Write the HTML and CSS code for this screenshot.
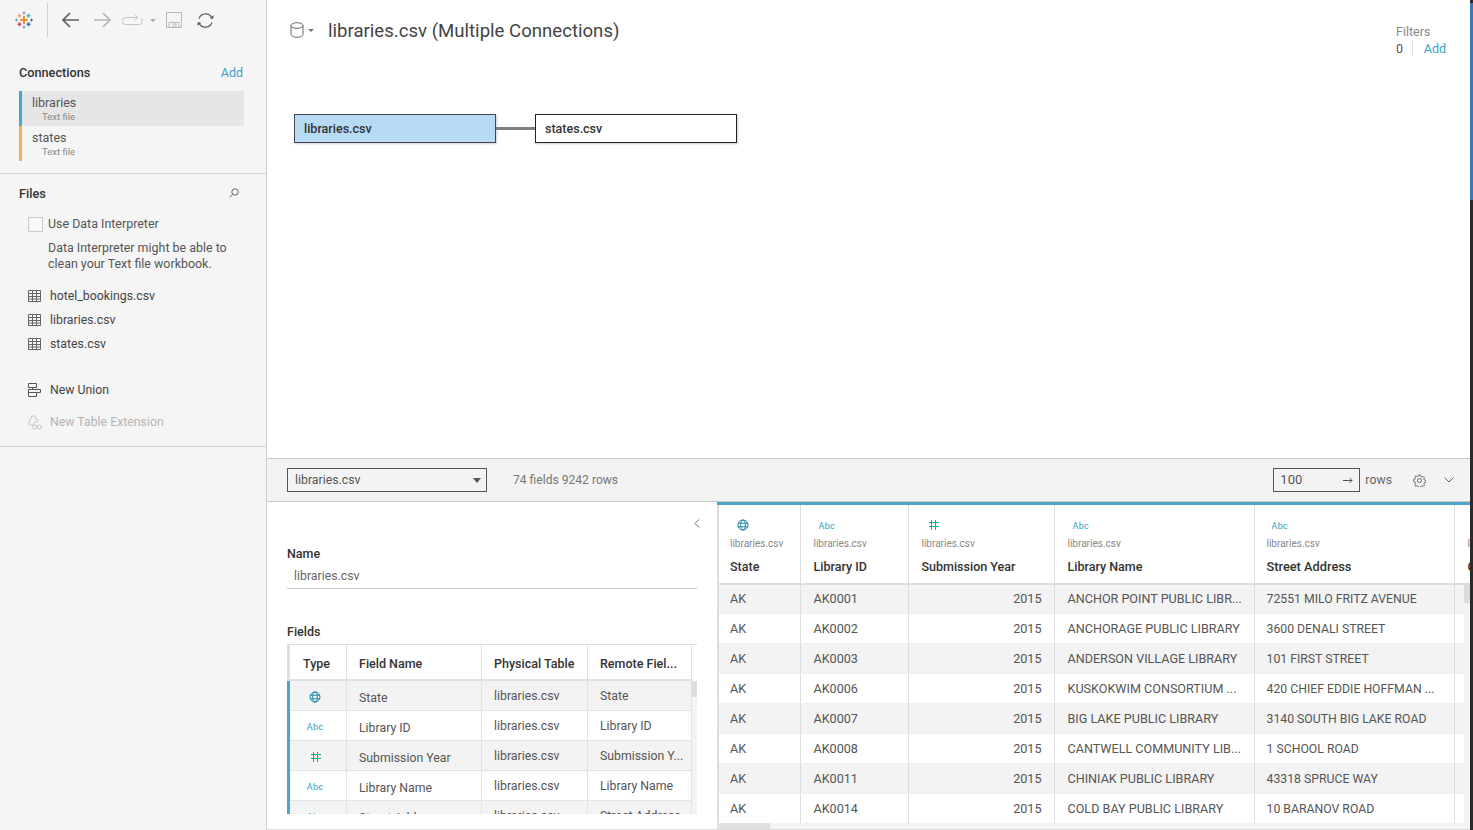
FILE: index.html
```html
<!DOCTYPE html>
<html lang="en">
<head>
<meta charset="utf-8">
<title>libraries.csv (Multiple Connections)</title>
<link rel="stylesheet" href="styles.css">
</head>
<body>
<svg class="defs" aria-hidden="true">
  <symbol id="i-table" viewBox="0 0 13 12"><path d="M.5.5h12v11H.5zM.5 3.5h12M.5 6.5h12M.5 9h12M4.5.5v11M8.5.5v11" fill="none" stroke="#666"/></symbol>
  <symbol id="i-globe" viewBox="0 0 12 12"><g fill="none" stroke="#1f87a8"><circle cx="6" cy="6" r="5"/><ellipse cx="6" cy="6" rx="2.3" ry="5"/><path d="M1 4.2h10M1 7.8h10"/></g></symbol>
  <symbol id="i-hash" viewBox="0 0 11 11"><path d="M3.5.5v10M7.5.5v10M.5 3.5h10M.5 7.5h10" fill="none" stroke="#12b07c" shape-rendering="crispEdges"/></symbol>
</svg>
<div class="app">
  <aside class="sidebar">
    <div class="toolbar">
      <svg class="logo" width="18" height="18" viewBox="0 0 18 18" fill="none" stroke-width="1.6">
        <path d="M9 5v8M5.3 9h7.4" stroke="#f28e2b" stroke-width="2"/>
        <path d="M4.5 2.7v4M2.5 4.7h4" stroke="#f5ab63"/>
        <path d="M13.5 2.7v4M11.5 4.7h4" stroke="#6fa8bd"/>
        <path d="M4.5 11.3v4M2.5 13.3h4" stroke="#e3406a"/>
        <path d="M13.5 11.3v4M11.5 13.3h4" stroke="#3f6fa8"/>
        <path d="M9 .5v3M7.5 2h3M9 14.5v3M7.5 16h3" stroke="#6f9fb8" stroke-width="1.2"/>
        <path d="M1.5 7.5v3M0 9h3" stroke="#8a8fb0" stroke-width="1.2"/>
        <path d="M16.5 7.5v3M15 9h3" stroke="#4d6f9f" stroke-width="1.2"/>
      </svg>
      <span class="tool-sep"></span>
      <svg class="tool-back" width="18" height="16" viewBox="0 0 18 16" fill="none" stroke="#5f5f5f" stroke-width="1.7"><path d="M18 8H2M9 1 2 8l7 7"/></svg>
      <svg class="tool-fwd" width="18" height="16" viewBox="0 0 18 16" fill="none" stroke="#b5b5b5" stroke-width="1.7"><path d="M0 8h16M9 1l7 7-7 7"/></svg>
      <svg class="tool-run" width="21" height="12" viewBox="0 0 21 12" fill="none" stroke="#c4c4c4"><path d="M15 3.500H3.500a3.500 3.500 0 0 0 0 7h14a2.500 2.500 0 0 0 2.500-2.500V4M13 .8l2.500 2.700L13 6.200"/></svg>
      <span class="tool-caret"></span>
      <svg class="tool-save" width="16" height="16" viewBox="0 0 16 16" fill="none" stroke="#b9b9b9"><path d="M.5.5h15v15H.5zM3 15.500v-5h10v5M7 12h3v3H7z"/></svg>
      <svg class="tool-refresh" width="17" height="17" viewBox="0 0 17 17" fill="none" stroke="#5f5f5f" stroke-width="1.2"><path d="M2 6.500A7 7 0 0 1 15 6M15 10.500A7 7 0 0 1 2 11"/><path d="m13 6 3 .5.300-3M4 11l-3-.5-.300 3" fill="#5f5f5f" stroke-width=".6"/></svg>
    </div>

    <section class="connections">
      <div class="side-head"><h2>Connections</h2><a class="add">Add</a></div>
      <div class="conn conn-blue"><div class="conn-name">libraries</div><div class="conn-type">Text file</div></div>
      <div class="conn conn-orange"><div class="conn-name">states</div><div class="conn-type">Text file</div></div>
    </section>

    <section class="files">
      <div class="side-head files-head"><h2>Files</h2>
        <svg width="10" height="10" viewBox="0 0 10 10" fill="none" stroke="#666"><circle cx="6" cy="4" r="3.200"/><path d="M3.800 6.300.8 9.300"/></svg>
      </div>
      <label class="interp"><span class="check"></span><span class="interp-text">Use Data Interpreter</span></label>
      <p class="interp-note">Data Interpreter might be able to clean your Text file workbook.</p>
      <ul class="file-list">
        <li><svg width="13" height="12"><use href="#i-table"/></svg>hotel_bookings.csv</li>
        <li><svg width="13" height="12"><use href="#i-table"/></svg>libraries.csv</li>
        <li><svg width="13" height="12"><use href="#i-table"/></svg>states.csv</li>
      </ul>
      <div class="action action-union">
        <svg width="13" height="14" viewBox="0 0 13 14" fill="none" stroke="#555"><path d="M.5.5h8v4h-8zM4.500 4.500v2M.5 6.500h12M12.500 6.500v3h-4M.5 6.500v7h8v-4H.5"/></svg>New Union
      </div>
      <div class="action action-ext">
        <svg width="15" height="15" viewBox="0 0 15 15" fill="none" stroke="#c8c8c8"><path d="M4 1h3l1 3 2 1v2H6v3H1V8l1-1-1-2 2-1z"/><circle cx="6.500" cy="12" r="2"/><circle cx="11" cy="12" r="2"/><path d="M13 12h2"/></svg>New Table Extension
      </div>
    </section>
  </aside>

  <main class="main">
    <section class="canvas">
      <header class="canvas-head">
        <svg class="db" width="14" height="16" viewBox="0 0 14 16" fill="none" stroke="#666"><ellipse cx="7" cy="3.500" rx="6" ry="2.800"/><path d="M1 3.500v9c0 1.500 2.700 2.800 6 2.800s6-1.300 6-2.800v-9"/></svg>
        <span class="db-caret"></span>
        <h1>libraries.csv (Multiple Connections)</h1>
        <div class="filters">
          <div class="filters-label">Filters</div>
          <div class="filters-row"><span>0</span><a class="add">Add</a></div>
        </div>
      </header>
      <div class="join">
        <div class="join-box join-left">libraries.csv</div>
        <span class="join-line"></span>
        <div class="join-box">states.csv</div>
      </div>
    </section>

    <div class="databar">
      <div class="select">libraries.csv<span class="select-caret"></span></div>
      <span class="meta">74 fields 9242 rows</span>
      <div class="databar-right">
        <div class="rows-input"><span class="rows-value">100</span>
          <svg width="10" height="7" viewBox="0 0 10 7" fill="none" stroke="#555"><path d="M0 3.500h9M6.500 1 9 3.500 6.500 6"/></svg>
        </div>
        <span class="rows-label">rows</span>
        <svg class="gear" width="13" height="13" viewBox="0 0 13 13" fill="none" stroke="#666"><circle cx="6.500" cy="6.500" r="2"/><path d="M5.500.7h2l.4 1.500 1.400.6 1.300-.8 1.400 1.400-.8 1.300.6 1.400 1.500.4v2l-1.500.4-.6 1.400.8 1.300-1.400 1.400-1.300-.8-1.400.6-.4 1.500h-2l-.4-1.500-1.400-.6-1.300.8L1.400 10.500l.8-1.300-.6-1.400L.1 7.500v-2l1.500-.4.600-1.400-.8-1.300L2.800 1.400l1.300.8 1.400-.6z" transform="translate(.5 .5) scale(.92)"/></svg>
        <svg class="chev" width="10" height="6" viewBox="0 0 10 6" fill="none" stroke="#666"><path d="m.5.5 4.500 4.500L9.500.5"/></svg>
      </div>
    </div>

    <div class="lower">
      <section class="meta-panel">
        <svg class="collapse" width="6" height="9" viewBox="0 0 6 9" fill="none" stroke="#666"><path d="M5 .5 1 4.500 5 8.500"/></svg>
        <h3 class="name-label">Name</h3>
        <div class="name-value">libraries.csv</div>
        <h3 class="fields-label">Fields</h3>
        <div class="fields-wrap">
          <table class="fields">
            <colgroup><col class="fc1"><col class="fc2"><col class="fc3"><col class="fc4"></colgroup>
            <thead><tr><th>Type</th><th>Field Name</th><th>Physical Table</th><th>Remote Fiel...</th></tr></thead>
            <tbody>
              <tr><td class="ty"><svg width="12" height="12"><use href="#i-globe"/></svg></td><td class="fn">State</td><td>libraries.csv</td><td>State</td></tr>
              <tr><td class="ty"><span class="abc">Abc</span></td><td class="fn">Library ID</td><td>libraries.csv</td><td>Library ID</td></tr>
              <tr><td class="ty"><svg width="11" height="11"><use href="#i-hash"/></svg></td><td class="fn">Submission Year</td><td>libraries.csv</td><td>Submission Y...</td></tr>
              <tr><td class="ty"><span class="abc">Abc</span></td><td class="fn">Library Name</td><td>libraries.csv</td><td>Library Name</td></tr>
              <tr><td class="ty"><span class="abc">Abc</span></td><td class="fn">Street Address</td><td>libraries.csv</td><td>Street Address</td></tr>
            </tbody>
          </table>
          <div class="fields-scroll"><span class="thumb"></span></div>
        </div>
      </section>

      <section class="grid-panel">
        <div class="grid-wrap">
          <table class="grid">
            <colgroup><col class="c1"><col class="c2"><col class="c3"><col class="c4"><col class="c5"><col class="c6"></colgroup>
            <thead>
              <tr>
                <th><div class="g-icon g-i1"><svg width="12" height="12"><use href="#i-globe"/></svg></div><div class="g-src">libraries.csv</div><div class="g-name">State</div></th>
                <th><div class="g-icon g-i2"><span class="abc">Abc</span></div><div class="g-src">libraries.csv</div><div class="g-name">Library ID</div></th>
                <th><div class="g-icon g-i3"><svg width="11" height="11"><use href="#i-hash"/></svg></div><div class="g-src">libraries.csv</div><div class="g-name">Submission Year</div></th>
                <th><div class="g-icon g-i2"><span class="abc">Abc</span></div><div class="g-src">libraries.csv</div><div class="g-name">Library Name</div></th>
                <th><div class="g-icon g-i2"><span class="abc">Abc</span></div><div class="g-src">libraries.csv</div><div class="g-name">Street Address</div></th>
                <th><div class="g-icon"></div><div class="g-src">libraries.csv</div><div class="g-name">City</div></th>
              </tr>
            </thead>
            <tbody>
              <tr><td>AK</td><td>AK0001</td><td class="num">2015</td><td>ANCHOR POINT PUBLIC LIBR...</td><td>72551 MILO FRITZ AVENUE</td><td></td></tr>
              <tr><td>AK</td><td>AK0002</td><td class="num">2015</td><td>ANCHORAGE PUBLIC LIBRARY</td><td>3600 DENALI STREET</td><td></td></tr>
              <tr><td>AK</td><td>AK0003</td><td class="num">2015</td><td>ANDERSON VILLAGE LIBRARY</td><td>101 FIRST STREET</td><td></td></tr>
              <tr><td>AK</td><td>AK0006</td><td class="num">2015</td><td>KUSKOKWIM CONSORTIUM ...</td><td>420 CHIEF EDDIE HOFFMAN ...</td><td></td></tr>
              <tr><td>AK</td><td>AK0007</td><td class="num">2015</td><td>BIG LAKE PUBLIC LIBRARY</td><td>3140 SOUTH BIG LAKE ROAD</td><td></td></tr>
              <tr><td>AK</td><td>AK0008</td><td class="num">2015</td><td>CANTWELL COMMUNITY LIB...</td><td>1 SCHOOL ROAD</td><td></td></tr>
              <tr><td>AK</td><td>AK0011</td><td class="num">2015</td><td>CHINIAK PUBLIC LIBRARY</td><td>43318 SPRUCE WAY</td><td></td></tr>
              <tr><td>AK</td><td>AK0014</td><td class="num">2015</td><td>COLD BAY PUBLIC LIBRARY</td><td>10 BARANOV ROAD</td><td></td></tr>
            </tbody>
          </table>
          <div class="grid-vscroll"><span class="vthumb"></span></div>
        </div>
        <div class="grid-hscroll"><span class="hthumb"></span></div>
      </section>
    </div>
  </main>
</div>
<div class="edge"></div>
</body>
</html>
```

FILE: styles.css
```css
* { box-sizing: border-box; }
html, body { margin: 0; height: 100%; overflow: hidden; }
body { font-family: Roboto, "Liberation Sans", sans-serif; font-size: 12.300px; color: #444; background: #fff; }
.defs { position: absolute; width: 0; height: 0; }
h1, h2, h3, p, ul { margin: 0; padding: 0; font-weight: inherit; font-size: inherit; }
.add { color: #3fa0c5; font-size: 12.500px; }

.app { display: flex; width: 1473px; height: 830px; }

/* Sidebar */
.sidebar { width: 267px; flex: none; background: #f5f5f5; border-right: 1px solid #cfcfcf; }
.toolbar { height: 41px; display: flex; align-items: center; position: relative; padding: 0 0 1px 15px; }
.tool-sep { width: 1px; height: 34px; background: #d0d0d0; margin-left: 14px; }
.tool-back { margin-left: 13px; }
.tool-fwd { margin-left: 15px; }
.tool-run { margin-left: 10px; }
.tool-caret { margin-left: 7px; border: 3px solid transparent; border-top: 3px solid #aaa; border-bottom: 0; }
.tool-save { margin-left: 10px; }
.tool-refresh { margin-left: 15px; }

.connections { padding: 22px 22px 12px 19px; }
.side-head { display: flex; justify-content: space-between; align-items: center; height: 18px; }
.side-head h2 { font-weight: 500; color: #333; font-size: 12.700px; }
.conn { height: 35px; border-left: 3px solid; padding: 5px 0 0 10px; }
.connections .side-head { margin-bottom: 10px; padding-right: 1px; }
.conn-blue { border-color: #4ba6c9; background: #e6e6e6; }
.conn-orange { border-color: #f9ae5e; }
.conn-name { font-size: 12.500px; line-height: 14px; color: #555; }
.conn-type { font-size: 9.500px; line-height: 13px; color: #888; padding-left: 10px; }

.files { border-top: 1px solid #d5d5d5; border-bottom: 1px solid #d5d5d5; padding: 10px 0 0 19px; height: 274px; }
.files-head { padding-right: 27px; }
.interp { display: flex; align-items: center; margin: 14px 0 0 9px; height: 16px; font-size: 12.450px; color: #555; }
.interp-text { margin-top: -1px; }
.check { width: 15px; height: 15px; border: 1px solid #ccc; background: #f8f8f8; margin-right: 5px; }
.interp-note { margin: 8px 30px 0 29px; line-height: 16px; font-size: 12.450px; color: #555; }
.file-list { list-style: none; margin: 12px 0 0 9px; }
.file-list li { height: 24px; display: flex; align-items: center; gap: 9px; color: #444; }
.action { display: flex; align-items: center; gap: 9px; margin-left: 9px; height: 24px; color: #444; }
.action-union { margin-top: 22px; }
.action-ext { margin-top: 8px; color: #b4b4b4; gap: 7px; }

/* Main */
.main { flex: 1; min-width: 0; display: flex; flex-direction: column; }
.canvas { height: 458px; flex: none; }
.canvas-head { display: flex; align-items: flex-start; padding: 23px 27px 0 23px; height: 114px; }
.db { margin-top: -1px; }
.db-caret { margin: 6px 0 0 4px; border: 3px solid transparent; border-top: 3px solid #777; border-bottom: 0; }
.canvas-head h1 { margin: -3px 0 0 14px; font-size: 18.600px; line-height: 22px; color: #444; }
.filters { margin: 1px 0 0 auto; width: 50px; font-size: 12.500px; }
.filters-label { color: #888; line-height: 15px; }
.filters-row { display: flex; margin-top: 2px; line-height: 15px; }
.filters-row span { width: 17px; border-right: 1px solid #ddd; margin-right: 11px; color: #555; }
.join { display: flex; align-items: center; margin-left: 27px; }
.join-box { width: 202px; height: 29px; border: 1px solid #222; background: #fff; padding-left: 9px; font-weight: 500; font-size: 12.500px; line-height: 27px; color: #333; box-shadow: 1px 1px 2px rgba(0,0,0,.2); }
.join-left { background: #b7daf5; border-color: #445; }
.join-line { width: 39px; height: 3px; background: #808080; }

.databar { height: 44px; flex: none; background: #f3f3f3; border-top: 1px solid #c8c8c8; border-bottom: 1px solid #c8c8c8; display: flex; align-items: center; padding: 0 19px 0 20px; }
.select { position: relative; width: 200px; height: 24px; border: 1px solid #555; padding-left: 7px; line-height: 22px; color: #555; }
.select-caret { position: absolute; right: 5px; top: 9px; border: 4px solid transparent; border-top: 5px solid #555; border-bottom: 0; }
.meta { margin-left: 26px; font-size: 12.100px; color: #777; }
.databar-right { margin-left: auto; display: flex; align-items: center; }
.rows-input { width: 87px; height: 24px; border: 1px solid #555; padding: 0 6px 2px 6px; display: flex; align-items: center; justify-content: space-between; font-size: 13px; color: #555; }
.rows-input svg { margin-top: 2px; }
.rows-label { margin-left: 5px; color: #666; }
.gear { margin-left: 21px; }
.chev { margin-left: 18px; }

.lower { flex: 1; min-height: 0; display: flex; border-bottom: 1px solid #ddd; }

/* Metadata panel */
.meta-panel { width: 450px; flex: none; padding: 45px 20px 0 20px; position: relative; }
.collapse { position: absolute; left: 427px; top: 17px; }
.name-label, .fields-label { font-weight: 500; font-size: 12.500px; line-height: 14px; color: #333; }
.name-value { margin-top: 7px; padding: 0 0 3px 7px; line-height: 17px; border-bottom: 1px solid #ccc; color: #666; }
.fields-label { margin-top: 36px; }
.fields-wrap { display: flex; margin-top: 5px; height: 170px; overflow: hidden; border-top: 1px solid #ddd; }
.fields { border-collapse: collapse; table-layout: fixed; width: 403px; align-self: flex-start; flex: none; }
.fc1 { width: 58px; } .fc2 { width: 135px; } .fc3 { width: 106px; } .fc4 { width: 104px; }
.fields th { height: 35px; text-align: left; font-weight: 500; font-size: 12.500px; color: #333; padding: 3px 0 0 12px; border: 1px solid #e0e0e0; border-top: 0; border-bottom-width: 2px; white-space: nowrap; }
.fields th:first-child { border-left: 3px solid #e0e0e0; padding-left: 13px; }
.fields td { height: 30px; padding: 1px 0 0 12px; border: 1px solid #e3e3e3; border-top: 0; white-space: nowrap; color: #555; }
.fields td.fn { padding: 5px 0 0 12px; }
.fields td.ty { border-left: 3px solid #4ba6c9; padding: 3px 6px 0 0; text-align: center; line-height: 0; }
.fields tbody tr:nth-child(odd) td { background: #f3f3f3; }
.abc { font-size: 9px; line-height: 12px; color: #2f9fc0; letter-spacing: .3px; }
.fields-scroll { width: 6px; margin: 36px 0 0 0; background: #f3f3f3; }
.thumb { display: block; height: 16px; background: #ddd; }

/* Data grid */
.grid-panel { flex: 1; min-width: 0; display: flex; flex-direction: column; }
.grid-wrap { position: relative; flex: 1; min-height: 0; overflow: hidden; }
.grid { border-collapse: collapse; table-layout: fixed; width: 999px; }
.c1 { width: 82px; } .c2 { width: 108px; } .c3 { width: 146px; } .c4 { width: 200px; } .c5 { width: 200px; } .c6 { width: 263px; }
.grid th { height: 80px; padding: 3px 0 0 13px; text-align: left; vertical-align: top; font-weight: 400; border-top: 3px solid #4ba6c9; border-left: 1px solid #ddd; border-bottom: 2px solid #ddd; white-space: nowrap; }
.grid th:first-child, .grid td:first-child { border-left: 2px solid #ddd; padding-left: 11px; }
.grid th:nth-child(5) { padding-left: 12px; }
.g-icon { height: 14px; margin-top: 11px; line-height: 12px; }
.g-i1 { padding-left: 7px; } .g-i2 { padding-left: 5px; } .g-i3 { padding-left: 6px; }
.g-src { margin-top: 4px; font-size: 10px; line-height: 13px; color: #888; }
.g-name { margin-top: 9px; font-weight: 500; font-size: 12.500px; line-height: 15px; color: #333; }
.grid th:nth-child(5) .g-name { font-size: 12.800px; }
.grid td { height: 30px; padding: 0 0 1px 13px; font-size: 12.600px; border-left: 1px solid #ddd; border-bottom: 1px solid #eee; white-space: nowrap; overflow: hidden; color: #555; }
.grid td:nth-child(5) { font-size: 12.250px; padding: 1px 0 0 12px; }
.grid td.num { text-align: right; padding-right: 12px; }
.grid tbody tr:nth-child(odd) td { background: #f3f3f3; }
.grid-vscroll { position: absolute; right: 3px; top: 82px; bottom: 0; width: 6px; background: #f3f3f3; }
.vthumb { display: block; height: 19px; background: #ddd; }
.grid-hscroll { height: 6px; flex: none; background: #f3f3f3; }
.hthumb { display: block; width: 53px; height: 100%; background: #e0e0e0; }

.edge { position: absolute; left: 1470px; top: 0; width: 3px; height: 830px; background: #2a2a2a; }
.edge::after { content: ""; display: block; margin-top: 3px; height: 197px; background: #3c78b8; }
```
